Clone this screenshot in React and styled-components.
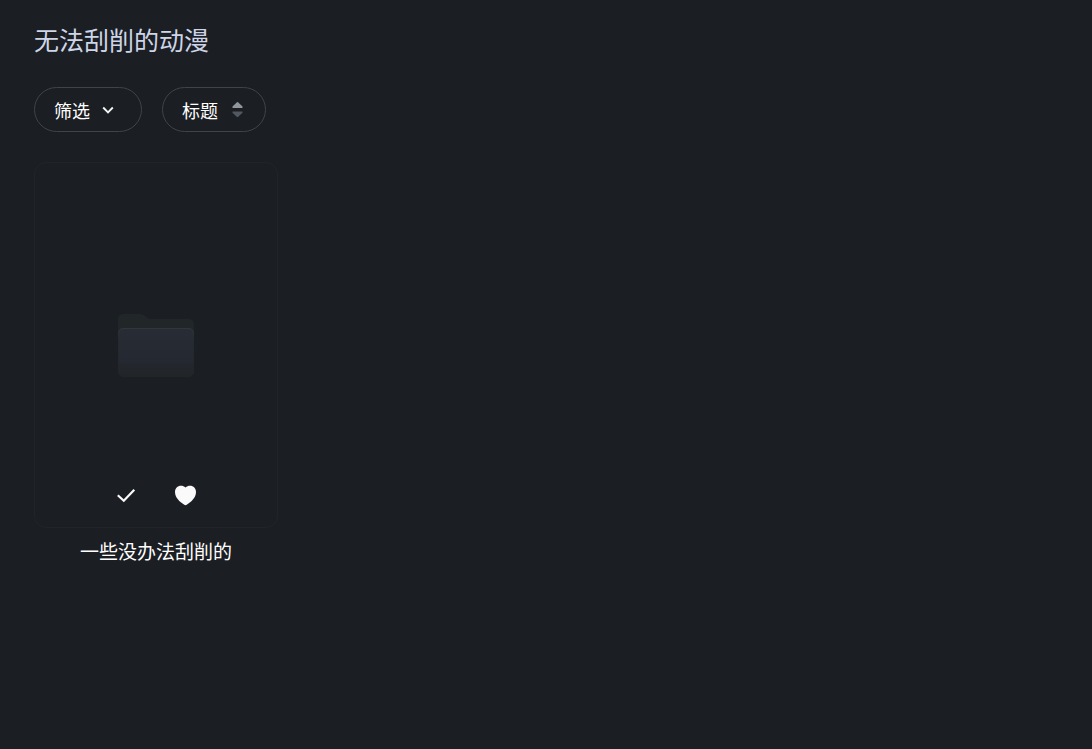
import React, { useState } from 'react';
import styled, { createGlobalStyle } from 'styled-components';

const GlobalStyle = createGlobalStyle`
    * {
        box-sizing: border-box;
    }

    body {
        margin: 0;
        background: #1b1e22;
        color: #ffffff;
        font-family: 'Noto Sans CJK SC', sans-serif;
    }

    button {
        padding: 0;
        border: 0;
        background: none;
        color: inherit;
        font: inherit;
        cursor: pointer;
    }
`;

const Page = styled.main`
    padding: 20px 34px;
`;

const Title = styled.h1`
    margin: 0;
    color: #cdd6e8;
    font-size: 25px;
    font-weight: 400;
    line-height: 38px;
`;

const Toolbar = styled.div`
    display: flex;
    gap: 20px;
    margin-top: 29px;
`;

const PillButton = styled.button`
    && {
        display: flex;
        align-items: center;
        gap: ${({ $gap }) => $gap};
        height: 45px;
        padding: 0 ${({ $end }) => $end} 0 19px;
        border: 1px solid #3f444a;
        border-radius: 23px;
        font-size: 18px;
        line-height: 24px;
    }
`;

const Grid = styled.ul`
    display: grid;
    grid-template-columns: repeat(auto-fill, 244px);
    gap: 24px 20px;
    margin: 30px 0 0;
    padding: 0;
    list-style: none;
`;

const Poster = styled.div`
    display: grid;
    grid-template-rows: 1fr auto 1fr;
    justify-items: center;
    aspect-ratio: 2 / 3;
    border: 1px solid #212529;
    border-radius: 12px;
`;

const FolderIcon = styled.svg`
    display: block;
    grid-row: 2;
`;

const Actions = styled.div`
    display: flex;
    grid-row: 3;
    align-self: end;
    gap: 36px;
    margin-bottom: 20px;
`;

const IconButton = styled.button`
    display: flex;
    width: 24px;
    height: 24px;
`;

const Name = styled.div`
    margin-top: 9px;
    font-size: 19px;
    line-height: 28px;
    text-align: center;
`;

const items = [{ id: 1, name: '一些没办法刮削的' }];

const Chevron = () => (
    <svg width="12" height="12" viewBox="0 0 12 12" fill="none" aria-hidden="true">
        <path d="M1.2 3.5 6 8.3 10.8 3.5" stroke="#f4f4f4" strokeWidth="1.9" />
    </svg>
);

const SortArrows = () => (
    <svg width="12" height="18" viewBox="0 0 12 18" aria-hidden="true">
        <path d="M4.7 1.4q.8-.7 1.6 0L10.500 5.500v1.500H.5V5.500z" fill="#8f969e" />
        <path d="M.5 10.500h10v1.200L6.300 15.800q-.8.700-1.600 0L.5 11.700z" fill="#51585f" />
    </svg>
);

const Folder = () => (
    <FolderIcon width="76" height="64" viewBox="0 0 76 64" aria-hidden="true">
        <defs>
            <linearGradient id="folder-front" x1="0" y1="0" x2="0" y2="1">
                <stop offset="0" stopColor="#282c35" />
                <stop offset="0.7" stopColor="#242831" />
                <stop offset="0.78" stopColor="#23262b" />
                <stop offset="1" stopColor="#222528" />
            </linearGradient>
            <linearGradient id="folder-edge" x1="0" y1="0" x2="0" y2="1">
                <stop offset="0" stopColor="#32363b" />
                <stop offset="0.2" stopColor="#262a30" />
                <stop offset="1" stopColor="#222528" />
            </linearGradient>
        </defs>
        <path d="M0 6a5 5 0 0 1 5-5h17q3 0 5 2l2 1.500q2 1.500 5 1.500h37a5 5 0 0 1 5 5V30H0z" fill="#212629" />
        <rect x="0.5" y="15.5" width="75" height="48" rx="4.5" fill="url(#folder-front)" stroke="url(#folder-edge)" />
    </FolderIcon>
);

const Check = () => (
    <svg width="24" height="24" viewBox="0 0 24 24" fill="none" aria-hidden="true">
        <path d="M3.8 12.2 9.8 17.8 20.3 6.8" stroke="#fafafa" strokeWidth="2.2" />
    </svg>
);

const Heart = () => (
    <svg width="24" height="24" viewBox="0 0 24 24" aria-hidden="true">
        <path d="M11.5 4.500C10.300 3.300 8.700 2.800 7 2.800 3.500 2.800 1 5.400 1 9c0 5.600 4.600 9.800 9.300 12.800q1.200.7 2.400 0C17.400 18.800 22 14.600 22 9c0-3.600-2.500-6.200-6-6.200-1.700 0-3.300.5-4.500 1.700z" fill="#fafafa" />
    </svg>
);

const MediaCard = ({ name }) => {
    const [watched, setWatched] = useState(false);
    const [liked, setLiked] = useState(false);

    return (
        <li>
            <Poster>
                <Folder />
                <Actions>
                    <IconButton type="button" aria-label="标记为已观看" aria-pressed={watched} onClick={() => setWatched(!watched)}>
                        <Check />
                    </IconButton>
                    <IconButton type="button" aria-label="收藏" aria-pressed={liked} onClick={() => setLiked(!liked)}>
                        <Heart />
                    </IconButton>
                </Actions>
            </Poster>
            <Name>{name}</Name>
        </li>
    );
};

const App = () => (
    <>
        <GlobalStyle />
        <Page>
            <Title>无法刮削的动漫</Title>
            {/* Filter and sort */}
            <Toolbar>
                <PillButton type="button" $gap="12px" $end="27px">
                    筛选
                    <Chevron />
                </PillButton>
                <PillButton type="button" $gap="14px" $end="21px">
                    标题
                    <SortArrows />
                </PillButton>
            </Toolbar>
            {/* Contents */}
            <Grid>
                {items.map(item => <MediaCard key={item.id} name={item.name} />)}
            </Grid>
        </Page>
    </>
);

export default App;
